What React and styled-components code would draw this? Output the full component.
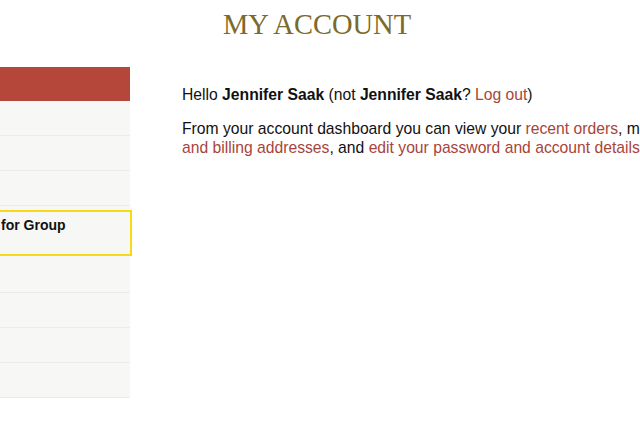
import styled, { createGlobalStyle } from "styled-components"

const GlobalStyle = createGlobalStyle`
    html, body {
        margin: 0;
        padding: 0;
        background: #ffffff;
        overflow: hidden;
    }
    body {
        font-family: "Liberation Sans", Arial, sans-serif;
        color: #111111;
    }
`

const StyledPage = styled.div`
    width: 640px;
    height: 426px;
    overflow: hidden;
`
const StyledTitle = styled.h1`
    margin: 0;
    padding: 7px 6px 0 0;
    font-family: "Liberation Serif", "Times New Roman", serif;
    font-weight: normal;
    font-size: 28.5px;
    line-height: 35px;
    color: #7b6a2c;
    text-align: center;
    text-transform: uppercase;
`
const StyledLayout = styled.div`
    display: flex;
    align-items: flex-start;
    gap: 52px;
    margin-top: 25px;
`
const StyledNav = styled.ul`
    list-style-type: none;
    margin: 0;
    padding: 0;
    width: 130px;
    flex-shrink: 0;
    background-color: #f7f7f6;
`
const StyledNavHeader = styled.li`
    height: 34px;
    background-color: #b4463a;
`
const StyledNavItem = styled.li`
    box-sizing: border-box;
    height: ${props => props.$active ? "46px" : "35px"};
    margin: ${props => props.$active ? "4px -2px 2px 0" : "0"};
    padding: ${props => props.$active ? "5px 0 0 1px" : "0"};
    border: ${props => props.$active ? "2px solid #f7d916" : "none"};
    border-left: none;
    border-bottom: ${props => props.$active ? "2px solid #f7d916" : "1px solid #ebebe9"};
    font-size: 14px;
    font-weight: bold;
    color: #111111;
`
const StyledContent = styled.div`
    width: 610px;
    flex-shrink: 0;
    padding-top: 18px;
    font-size: 15.7px;
    line-height: 19.5px;
`
const StyledParagraph = styled.p`
    margin: 0 0 14px;
`
const StyledLink = styled.a`
    color: #a8443b;
    text-decoration: none;
`

const App = () => {
    return (
        <StyledPage>
            <GlobalStyle />
            <StyledTitle>My Account</StyledTitle>
            <StyledLayout>
                <StyledNav>
                    <StyledNavHeader />
                    <StyledNavItem />
                    <StyledNavItem />
                    <StyledNavItem />
                    <StyledNavItem $active>for Group</StyledNavItem>
                    <StyledNavItem />
                    <StyledNavItem />
                    <StyledNavItem />
                    <StyledNavItem />
                </StyledNav>
                <StyledContent>
                    <StyledParagraph>
                        Hello <strong>Jennifer Saak</strong> (not <strong>Jennifer Saak</strong>? <StyledLink href="#">Log out</StyledLink>)
                    </StyledParagraph>
                    <StyledParagraph>
                        From your account dashboard you can view your <StyledLink href="#">recent orders</StyledLink>, manage your <StyledLink href="#">shipping and billing addresses</StyledLink>, and <StyledLink href="#">edit your password and account details</StyledLink>.
                    </StyledParagraph>
                </StyledContent>
            </StyledLayout>
        </StyledPage>
    )
}

export default App
